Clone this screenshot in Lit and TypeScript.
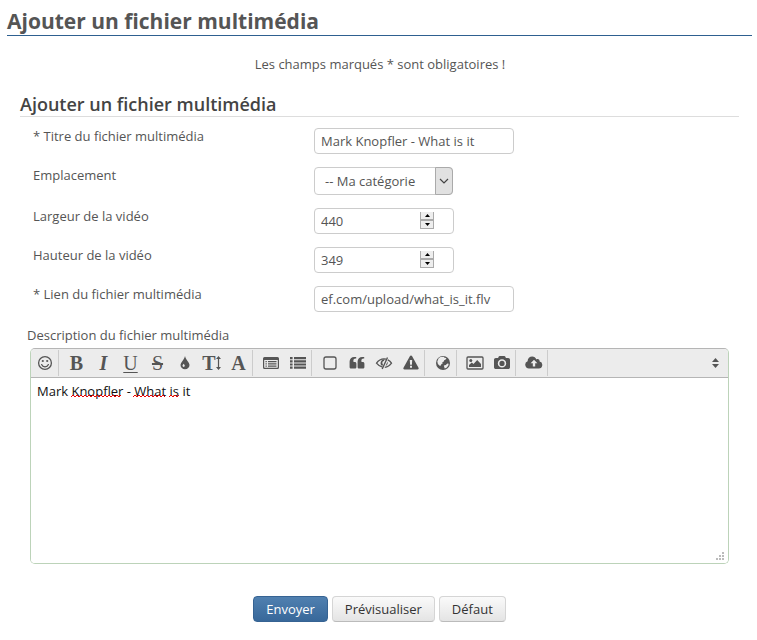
import { LitElement, html, svg, css } from "lit";
import type { SVGTemplateResult, TemplateResult } from "lit";
import { customElement } from "lit/decorators.js";

type Tool = { name: string; glyph?: string; kind?: string; icon?: SVGTemplateResult };

const groups: Tool[][] = [
  [
    {
      name: "Smileys",
      icon: svg`<circle cx="9" cy="9" r="6.4" fill="none" stroke="currentColor" stroke-width="1.3"/><circle cx="6.8" cy="7" r="1.1"/><circle cx="11.2" cy="7" r="1.1"/><path d="M5.6 10.6a3.7 3.7 0 0 0 6.8 0" fill="none" stroke="currentColor" stroke-width="1.3" stroke-linecap="round"/>`,
    },
  ],
  [
    { name: "Gras", glyph: "B", kind: "bold" },
    { name: "Italique", glyph: "I", kind: "italic" },
    { name: "Souligné", glyph: "U", kind: "underline" },
    { name: "Barré", glyph: "S", kind: "strike" },
    {
      name: "Couleur",
      icon: svg`<path fill-rule="evenodd" d="M9 2c.5 2 1.5 3.4 2.7 5.2C12.7 8.700 13.5 9.8 13.5 11a4.5 4.3 0 0 1-9 0c0-1.2.8-2.3 1.800-3.800C7.5 5.400 8.5 4 9 2ZM8.800 11.800c0-.8-.7-1.300-1.100-2.100-.5.8-1.200 1.300-1.200 2.100a1.150 1.150 0 0 0 2.300 0Z"/>`,
    },
    { name: "Taille", glyph: "T", kind: "size" },
    { name: "Police", glyph: "A", kind: "bold" },
  ],
  [
    {
      name: "Titres",
      icon: svg`<path fill-rule="evenodd" d="M2.5 3h13A1.5 1.5 0 0 1 17 4.5v9a1.5 1.5 0 0 1-1.5 1.5h-13A1.5 1.5 0 0 1 1 13.5v-9A1.5 1.5 0 0 1 2.5 3ZM2.2 6v7.300c0 .3.2.5.5.5h12.600c.3 0 .5-.2.5-.5V6Z"/><path d="M3.5 7h1.300v1.200H3.5ZM6 7h8.5v1.200H6ZM3.5 9.300h1.300v1.200H3.5ZM6 9.300h8.5v1.200H6ZM3.5 11.600h1.300v1.200H3.5ZM6 11.600h8.5v1.200H6Z"/>`,
    },
    {
      name: "Liste",
      icon: svg`<path d="M1 3h2.600v2.200H1ZM5 3h12v2.200H5ZM1 6.200h2.600v2.200H1ZM5 6.200h12v2.200H5ZM1 9.400h2.600v2.200H1ZM5 9.400h12v2.200H5ZM1 12.600h2.600v2.200H1ZM5 12.600h12v2.200H5Z"/>`,
    },
  ],
  [
    {
      name: "Conteneur",
      icon: svg`<rect x="3" y="3" width="12" height="12" rx="2" fill="none" stroke="currentColor" stroke-width="1.3"/>`,
    },
    {
      name: "Citation",
      icon: svg`<path d="M8.200 3v1.500H7.500A2.200 2.200 0 0 0 5.300 6.700v.6c0 .5.300.8.800.8h.7c.9 0 1.600.7 1.600 1.600v3.200c0 .9-.7 1.600-1.600 1.600H3.200c-.9 0-1.600-.7-1.600-1.600V7.500A4.500 4.500 0 0 1 6.100 3ZM16.200 3v1.500h-.7a2.200 2.200 0 0 0-2.200 2.200v.6c0 .5.300.8.800.8h.7c.9 0 1.600.7 1.600 1.600v3.200c0 .9-.7 1.600-1.600 1.600h-3.600c-.9 0-1.600-.7-1.600-1.600V7.500A4.500 4.500 0 0 1 14.100 3Z"/>`,
    },
    {
      name: "Masquer",
      icon: svg`<path d="M7.500 13.200C5 12.600 2.900 11 1.500 9.200 3.300 6.600 6 4.900 9 4.900c.7 0 1.400.1 2 .3M12.800 5.900c1.500.8 2.800 1.900 3.700 3.300-1.600 2.300-3.900 3.900-6.700 4.200" fill="none" stroke="currentColor" stroke-width="1.3"/><path d="M12.500 3.500 7.200 15" fill="none" stroke="currentColor" stroke-width="1.4"/><path d="M9.800 5.400A3.600 3.600 0 0 0 7.300 12L8 10.500C7 9.500 7 7.500 8.800 7ZM12.500 7.500c.7 2-.3 3.900-1.900 4.500Z"/>`,
    },
    {
      name: "Alerte",
      icon: svg`<path fill-rule="evenodd" d="M9 1.500c.5 0 .8.200 1 .6l6.500 11.600c.5.800-.1 1.700-1 1.700h-13c-.9 0-1.500-.9-1-1.700L8 2.100c.2-.4.500-.6 1-.6ZM7.800 6l.3 4.700h1.800l.3-4.700ZM8 11.800v1.900h2v-1.900Z"/>`,
    },
  ],
  [
    {
      name: "Lien",
      icon: svg`<circle cx="9" cy="9" r="7"/><path class="cut" d="M4.600 4.200 6.500 3l3.300-.3.700 1 1.800.2-.3 1.400-1.800.9-.4 1.300-1.500.8.4 1.200-1.200.6-.9 1.600-1.400-.2L3.800 9.800 3.300 7.500ZM9.800 11.600l2-.6 1.600-1.500 1.300.2-.5 2-1.700 2.100-1.800.7Z"/>`,
    },
  ],
  [
    {
      name: "Image",
      icon: svg`<rect x="1" y="3" width="16" height="12" rx="1" fill="none" stroke="currentColor" stroke-width="1.3"/><circle cx="4.8" cy="6.4" r="1.5"/><path d="M3 13v-2l2.800-2.500 1.700 1.500 3.700-4L15 10v3Z"/>`,
    },
    {
      name: "Photo",
      icon: svg`<path fill-rule="evenodd" d="M6.700 2h4.600c.5 0 .9.300 1.100.8l.5 1.300h2.300c1 0 1.800.8 1.800 1.800v7.300c0 1-.8 1.800-1.800 1.800H2.800C1.800 15 1 14.200 1 13.200V5.900c0-1 .8-1.800 1.800-1.800h2.300l.5-1.300c.2-.5.600-.8 1.100-.8ZM9 5.200a4.200 4.200 0 1 0 0 8.400 4.200 4.200 0 0 0 0-8.400Zm0 1.600a2.600 2.600 0 1 1 0 5.200 2.600 2.600 0 0 1 0-5.200Z"/>`,
    },
  ],
  [
    {
      name: "Téléverser",
      icon: svg`<path fill-rule="evenodd" d="M4.300 14.500A3.800 3.800 0 0 1 2.600 7.200C2.600 4.500 4.700 2.600 7.200 2.600c1.900 0 3.500 1.100 4.200 2.800 1.700-.9 3.500.4 3.200 2.200a3.500 3.500 0 0 1-.9 6.900ZM9 5.700 5.600 9.200h2.200v3.400h2.400V9.200h2.200Z"/>`,
    },
  ],
];

/* Words flagged by the spell checker: lead-in from the previous mark, then width. */
const marks = [
  { lead: 34, width: 50 },
  { lead: 12, width: 32 },
  { lead: 4, width: 10 },
];

@customElement("media-form")
class MediaForm extends LitElement {
  static styles = css`
    :host { display: block; color: #555; font: 13px/16px "Open Sans", sans-serif; }
    * { box-sizing: border-box; }
    button, input, select, textarea { font: inherit; color: inherit; margin: 0; }
    h1 {
      margin: 7px 5px 0 7px; padding: 0; border-bottom: 1px solid #2e6090;
      font-size: 21px; line-height: 28px; font-weight: 700;
    }
    .note { margin: 20px 0 0; text-align: center; padding-left: 3px; }
    .section { margin: 20px 18px 0 20px; }
    h2 {
      margin: 0; border-bottom: 1px solid #ddd; color: #444;
      font-size: 18px; line-height: 24px; font-weight: 600;
    }
    .fields { display: grid; gap: 13px; padding: 11px 13px 0; }
    .field { display: grid; grid-template-columns: 281px 1fr; align-items: start; }
    .box {
      width: 200px; max-width: 100%; height: 26px; padding: 0 6px;
      border: 1px solid #ccc; border-radius: 4px; background: #fff; outline: 0;
    }
    .short { position: relative; width: 140px; }
    .short .box { display: block; width: 100%; appearance: textfield; }
    .box::-webkit-inner-spin-button { appearance: none; }
    .spin { position: absolute; right: 20px; top: 4px; display: grid; width: 14px; }
    .spin button {
      height: 8px; padding: 0; border: 1px solid #aaa; border-top: 0; background: #eee;
      display: grid; place-items: center; color: #000;
    }
    .spin button + button { height: 9px; border-top: 1px solid #aaa; }
    .spin svg { width: 5px; height: 3px; display: block; fill: #000; }
    .pick { position: relative; width: 139px; }
    .pick select {
      display: block; width: 100%; height: 28px; padding: 0 20px 0 10px;
      border: 1px solid #ccc; border-radius: 4px; background: #fff; appearance: none;
    }
    .arrow {
      position: absolute; right: 0; top: 0; width: 18px; height: 28px; pointer-events: none;
      display: grid; place-items: center; border: 1px solid #aaa; border-radius: 0 4px 4px 0; background: #e1e1e1;
    }
    .about { display: block; margin: 14px 0 0 7px; line-height: 18px; }
    .editor {
      position: relative; margin: 4px 10px 0; border: 1px solid #bcd3b9; border-top-color: #b5b5b5;
      border-radius: 5px; overflow: hidden;
    }
    .bar {
      display: flex; align-items: center; height: 29px; background: #ececec;
      border-bottom: 1px solid #b5b5b5;
    }
    .group { display: flex; padding-left: 4px; border-right: 1px solid #ccc; }
    .group:first-child { padding-left: 0; }
    .bar button {
      width: 27px; height: 26px; padding: 0; border: 0; background: none; color: #555;
      display: flex; align-items: center; justify-content: center;
    }
    .icon { width: 18px; height: 18px; fill: currentColor; display: block; }
    .cut { fill: #ececec; }
    .glyph { font: bold 20px/24px "Liberation Serif", serif; }
    .italic { font-style: italic; }
    .underline { text-decoration: underline; text-decoration-thickness: 1px; text-underline-offset: 2px; font-weight: 400; }
    .strike { font-weight: 400; text-decoration: line-through; text-decoration-thickness: 2px; }
    .tall { width: 5px; height: 14px; fill: currentColor; }
    .bar .more { margin-left: auto; width: 25px; }
    .more svg { width: 7px; height: 10px; fill: currentColor; }
    textarea {
      display: block; width: 100%; height: 185px; padding: 5px 6px; border: 0; outline: 0;
      resize: none; background: #fff; color: #111;
    }
    .marks { position: absolute; left: 6px; top: 45px; display: flex; pointer-events: none; }
    .marks svg { height: 4px; display: block; }
    .grip { position: absolute; right: 3px; bottom: 2px; width: 9px; height: 9px; fill: #bbb; }
    .actions { display: flex; justify-content: center; gap: 4px; padding: 32px 0 18px; }
    .actions button {
      height: 26px; padding: 0 12px; border: 1px solid #d5d5d5; border-bottom-color: #bbb;
      border-radius: 4px; background: linear-gradient(#fafafa, #e4e4e4); color: #333;
    }
    .actions .primary { border-color: #366393; background: linear-gradient(#5080b0, #38689a); color: #fff; }
  `;

  private tool(t: Tool): TemplateResult {
    return html`<button type="button" title=${t.name} aria-label=${t.name}>
      ${t.icon
        ? html`<svg class="icon" viewBox="0 0 18 18">${t.icon}</svg>`
        : html`<span class="glyph ${t.kind}">${t.glyph}</span>`}
      ${t.kind === "size"
        ? html`<svg class="tall" viewBox="0 0 5 14"><path d="M2.5 0 5 3H3.100v8H5l-2.500 3L0 11h1.900V3H0Z"/></svg>`
        : null}
    </button>`;
  }

  private numberField(id: string, label: string, value: number): TemplateResult {
    return html`<div class="field">
      <label for=${id}>${label}</label>
      <div class="short">
        <input class="box" id=${id} type="number" .value=${String(value)} />
        <div class="spin">
          <button type="button" aria-label="Augmenter" @click=${() => this.step(id, 1)}><svg viewBox="0 0 5 3"><path d="M2.5 0 5 3H0Z"/></svg></button>
          <button type="button" aria-label="Diminuer" @click=${() => this.step(id, -1)}><svg viewBox="0 0 5 3"><path d="M0 0h5L2.5 3Z"/></svg></button>
        </div>
      </div>
    </div>`;
  }

  private step(id: string, by: number) {
    this.renderRoot.querySelector<HTMLInputElement>(`#${id}`)!.stepUp(by);
  }

  private wave(width: number) {
    let d = "M0 3";
    for (let x = 2; x <= width; x += 2) d += `L${x} ${x % 4 ? 1 : 3}`;
    return d;
  }

  render() {
    return html`
      <h1>Ajouter un fichier multimédia</h1>
      <p class="note">Les champs marqués * sont obligatoires !</p>
      <form class="section" @submit=${(e: Event) => e.preventDefault()}>
        <h2>Ajouter un fichier multimédia</h2>
        <div class="fields">
          <div class="field">
            <label for="title">* Titre du fichier multimédia</label>
            <input class="box" id="title" type="text" .value=${"Mark Knopfler - What is it"} />
          </div>
          <div class="field">
            <label for="place">Emplacement</label>
            <div class="pick">
              <select id="place"><option>-- Ma catégorie</option></select>
              <span class="arrow"><svg width="10" height="6" viewBox="0 0 10 6"><path d="m1 1 4 4 4-4" fill="none" stroke="#444" stroke-width="1.2"/></svg></span>
            </div>
          </div>
          ${this.numberField("width", "Largeur de la vidéo", 440)}
          ${this.numberField("height", "Hauteur de la vidéo", 349)}
          <div class="field">
            <label for="link">* Lien du fichier multimédia</label>
            <input class="box" id="link" type="text" .value=${"ef.com/upload/what_is_it.flv"} />
          </div>
        </div>
        <label class="about" for="about">Description du fichier multimédia</label>
        <div class="editor">
          <div class="bar">
            ${groups.map((g) => html`<div class="group">${g.map((t) => this.tool(t))}</div>`)}
            <button class="more" type="button" aria-label="Plus"><svg viewBox="0 0 7 10"><path d="M3.5 0 7 4H0ZM0 6h7l-3.500 4Z"/></svg></button>
          </div>
          <textarea id="about" spellcheck="false" .value=${"Mark Knopfler - What is it"}></textarea>
          <div class="marks">
            ${marks.map((m) => html`<svg style="width:${m.width}px;margin-left:${m.lead}px"><path d=${this.wave(m.width)} fill="none" stroke="#e00" stroke-width="1"/></svg>`)}
          </div>
          <svg class="grip" viewBox="0 0 9 9"><path d="M6 0h2v2H6ZM3 3h2v2H3ZM6 3h2v2H6ZM0 6h2v2H0ZM3 6h2v2H3ZM6 6h2v2H6Z"/></svg>
        </div>
        <div class="actions">
          <button class="primary" type="submit">Envoyer</button>
          <button type="button">Prévisualiser</button>
          <button type="reset">Défaut</button>
        </div>
      </form>
    `;
  }
}

@customElement("app-root")
class AppRoot extends LitElement {
  static styles = css`:host { display: flow-root; min-height: 100vh; background: #fff; }`;
  render() {
    return html`<media-form></media-form>`;
  }
}
